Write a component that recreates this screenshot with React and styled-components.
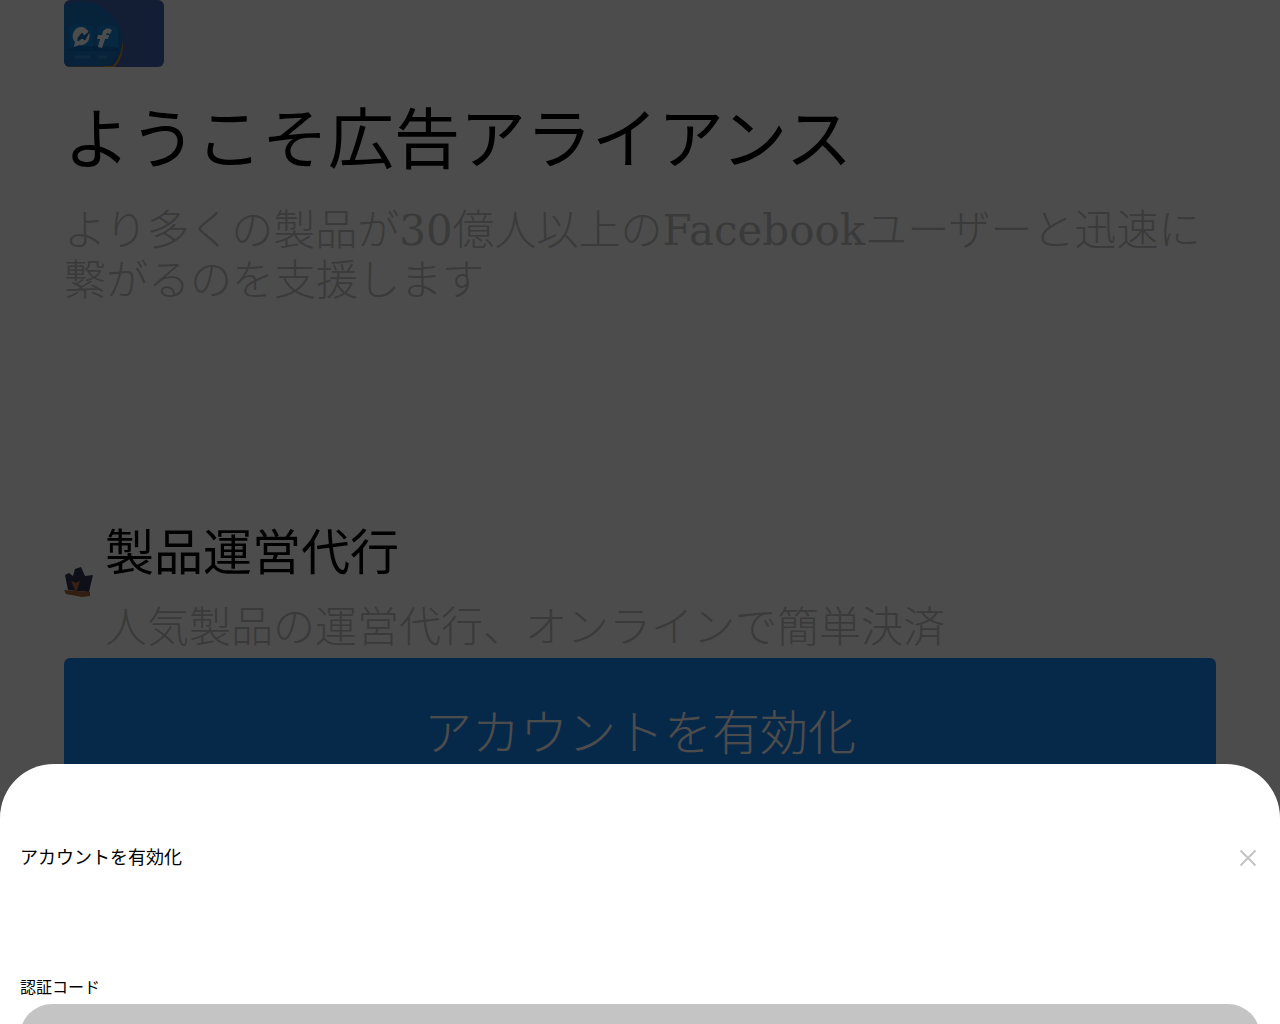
import React from "react";
import styled, { createGlobalStyle } from "styled-components";

const GlobalStyle = createGlobalStyle`
  * { box-sizing: border-box; }
  html, body, #root { height: 100%; }
  body {
    margin: 0;
    overflow: hidden;
    background: #fff;
    color: #000;
    font-family: "DejaVu Serif", "Noto Sans CJK JP", serif;
    font-weight: 300;
  }
  h1, h2, p { margin: 0; }
  button, input { font-family: inherit; font-weight: inherit; border: 0; }
`;

const Page = styled.main`
  display: flex;
  flex-direction: column;
  padding: 0 5%;
`;

const Logo = styled.svg`
  display: block;
  width: 100px;
  height: 67px;
  border-radius: 6px;
`;

const Title = styled.h1`
  margin-top: 32px;
  font-size: 66px;
  font-weight: 400;
  line-height: 84px;
`;

const Lead = styled.p`
  min-height: 316px;
  margin-top: 23px;
  font-size: 42px;
  line-height: 50px;
  color: #c4c4c4;
`;

const Feature = styled.section`
  display: flex;
  align-items: center;
  gap: 11px;
`;

const Crown = styled.svg`
  flex: none;
  width: 30px;
  height: 32px;
  margin-bottom: 14px;
`;

const FeatureTitle = styled.h2`
  font-size: 49px;
  font-weight: 400;
  line-height: 64px;
`;

const FeatureText = styled.p`
  margin-top: 12px;
  font-size: 42px;
  line-height: 60px;
  color: #c4c4c4;
`;

const Activate = styled.button`
  width: 100%;
  height: 142px;
  border-radius: 6px;
  background: #1785f5;
  color: #fff;
  font-size: 48px;
`;

const Overlay = styled.div`
  position: fixed;
  inset: 0;
  background: rgba(0, 0, 0, 0.7);
`;

const Sheet = styled.section`
  position: fixed;
  left: 0;
  right: 0;
  bottom: 0;
  max-height: 260px;
  overflow: hidden;
  padding: 80px 20px 0;
  border-radius: 54px 54px 0 0;
  background: #fff;
`;

const SheetHeader = styled.header`
  display: flex;
  align-items: center;
  justify-content: space-between;
  height: 28px;
`;

const SheetTitle = styled.h2`
  font-size: 18px;
  font-weight: 400;
  line-height: 28px;
`;

const Close = styled.button`
  display: flex;
  padding: 0;
  background: none;
  color: #c4c4c4;
`;

const Field = styled.form`
  display: flex;
  flex-direction: column;
  gap: 4px;
  margin-top: 104px;
`;

const Label = styled.label`
  font-size: 16px;
  font-weight: 400;
  line-height: 24px;
`;

const Input = styled.input`
  width: 100%;
  height: 64px;
  padding: 0 32px;
  border-radius: 32px;
  background: #c4c4c4;
  font-size: 18px;
  outline: 0;
`;

function LogoArt() {
  return (
    <Logo viewBox="0 0 100 67" role="img" aria-label="広告アライアンス">
      <defs>
        <radialGradient id="sea" cx="50%" cy="45%" r="60%">
          <stop offset="0" stopColor="#137fd8" />
          <stop offset="1" stopColor="#1972bd" />
        </radialGradient>
      </defs>
      <rect width="100" height="67" fill="#4164b3" />
      <circle cx="18" cy="43" r="41" fill="#1972bd" />
      <path d="M0 67h51q9-10 8-28q-1 17-10 27H0z" fill="#d98a2a" />
      <circle cx="17" cy="38" r="37" fill="url(#sea)" opacity=".5" />
      <path d="M5 27q13-5 24 0v23H5zM33 27q11-5 21 0v23H33z" fill="#1389d9" opacity=".8" />
      <path d="M4 48q25-4 51 0v3H4z" fill="#0b55aa" opacity=".6" />
      <path d="M18 27a9 9 0 1 1-3 18l-5 2 1-5a9 9 0 0 1 7-15z" fill="#fff" />
      <path d="M14 38l4-5 2 3 5-4-4 8-3-2-4 3z" fill="#176eb5" stroke="#176eb5" />
      <path d="M34 47l2-8h-3l1-4h4c1-6 5-8 10-5l-2 4c-2-1-4-1-4 1h3l-1 4h-3l-3 9z" fill="#fff" />
      <path d="M11 57h15M35 57h8" stroke="#55a2dc" strokeWidth="3" opacity=".5" />
    </Logo>
  );
}

function CrownArt() {
  return (
    <Crown viewBox="0 0 30 32" aria-hidden="true">
      <path d="M1 8l4-2 4 3 2-7 6-2 4 9 8-1-4 17-21-2z" fill="#303554" />
      <path d="M7 14l5 2 4-2-3 9h-2z" fill="#bd713e" />
      <path d="M0 23l26 2v4l-8 1-16-3z" fill="#a9683c" />
    </Crown>
  );
}

export default function App() {
  return (
    <>
      <GlobalStyle />
      <Page lang="ja">
        <LogoArt />
        <Title>ようこそ広告アライアンス</Title>
        <Lead>より多くの製品が30億人以上のFacebookユーザーと迅速に繋がるのを支援します</Lead>
        <Feature>
          <CrownArt />
          <div>
            <FeatureTitle>製品運営代行</FeatureTitle>
            <FeatureText>人気製品の運営代行、オンラインで簡単決済</FeatureText>
          </div>
        </Feature>
        <Activate type="button">アカウントを有効化</Activate>
      </Page>
      <Overlay />
      <Sheet role="dialog" aria-modal="true" aria-labelledby="sheet-title">
        <SheetHeader>
          <SheetTitle id="sheet-title">アカウントを有効化</SheetTitle>
          <Close type="button" aria-label="閉じる">
            <svg width="24" height="24" viewBox="0 0 24 24" fill="none" stroke="currentColor" strokeWidth="2">
              <path d="M4.5 4.5l15 15M19.5 4.5l-15 15" />
            </svg>
          </Close>
        </SheetHeader>
        <Field>
          <Label htmlFor="code">認証コード</Label>
          <Input id="code" type="text" />
        </Field>
      </Sheet>
    </>
  );
}
